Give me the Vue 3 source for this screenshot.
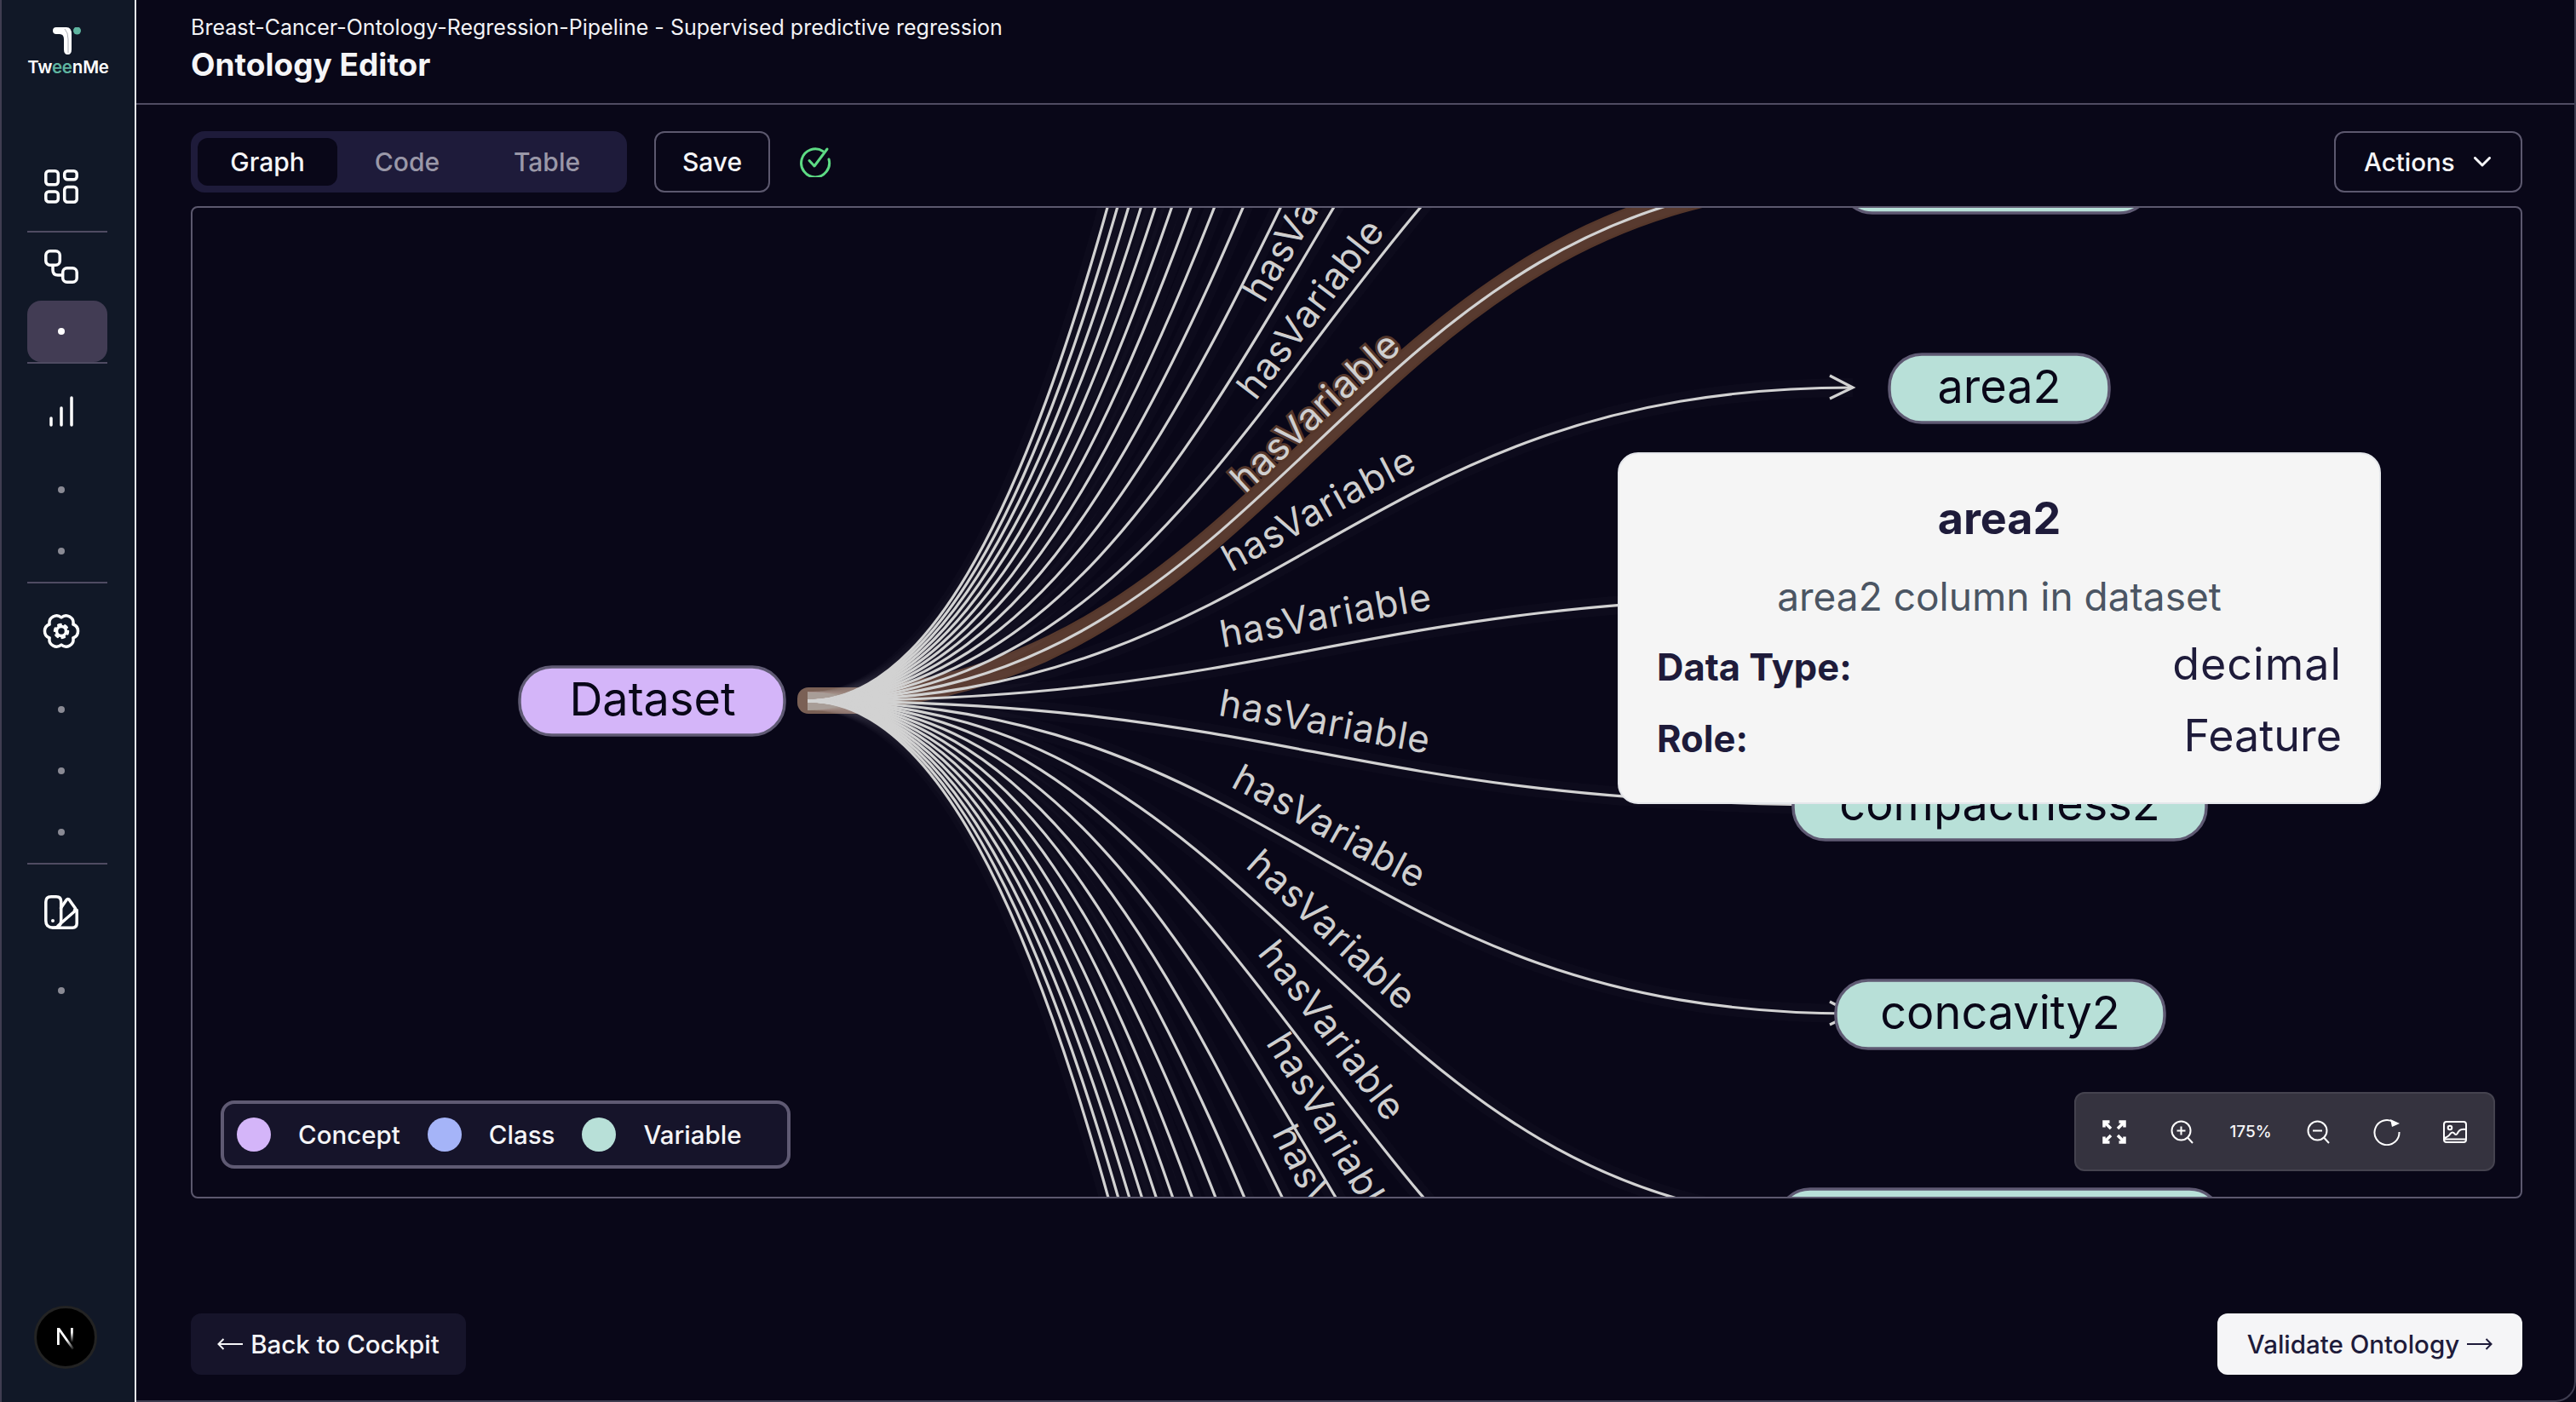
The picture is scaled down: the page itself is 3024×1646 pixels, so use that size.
<script setup>
// vertical spacing of the variable nodes in the graph
const STEP = 245
const START_X = 948
const START_Y = 823
const END_X = 2175

const ys = []
for (let k = -13; k <= 16; k++) ys.push(455 + k * STEP)

const edgePath = (y) =>
  `M${START_X} ${START_Y} C1510 ${START_Y} 1580 ${y} ${END_X} ${y}`

const edges = ys.map((y) => ({
  y,
  d: edgePath(y),
  arrow: `M${END_X - 27} ${y - 14} L${END_X} ${y} L${END_X - 27} ${y + 13}`,
  active: y === 210,
}))
const activeEdge = edgePath(210)

const labelOffset = (y) => {
  if (y === 700) return '50.1%'
  if (y < START_Y) return '50.5%'
  return `${49 - ((y - 945) / STEP) * 0.4}%`
}

// labels sit near the middle of an edge, the others fall outside the canvas
const labelled = edges
  .filter((edge) => edge.y > -300 && edge.y < 2200)
  .map((edge) => ({
    ...edge,
    offset: labelOffset(edge.y),
    dy: edge.y <= 210 ? -13 : -22,
  }))

const nodes = [
  { x: 2160, y: 170, w: 366, label: '' },
  { x: 2218, y: 416, w: 258, label: 'area2' },
  { x: 2105, y: 906, w: 485, label: 'compactness2' },
  { x: 2155, y: 1151, w: 386, label: 'concavity2' },
  { x: 2087, y: 1396, w: 521, label: '' },
]

const legend = [
  { name: 'Concept', cls: 'concept' },
  { name: 'Class', cls: 'class' },
  { name: 'Variable', cls: 'variable' },
]
</script>

<template>
  <div class="page">
    <aside class="sidebar">
      <div class="logo">
        <svg class="logo-mark" viewBox="0 0 36 34" width="36" height="34">
          <path d="M4 0H16Q22 0 22 8V26Q22 32 17.500 32Q13 32 13 26V14Q13 8 8 8H4Q0 8 0 4Q0 0 4 0Z" fill="#fff" />
          <path d="M14 2Q18 6 18 14V30" fill="none" stroke="#111827" stroke-width="1" opacity=".35" />
          <circle cx="28.500" cy="4" r="4.500" fill="#5fb5a0" />
        </svg>
        <div class="logo-text">Tw<span>ee</span>nMe</div>
      </div>

      <nav class="nav">
        <div class="nav-item gap-16">
          <svg viewBox="0 0 40 40" width="40" height="40" class="icon">
            <rect x="1.800" y="1.800" width="14.500" height="16" rx="3.500" />
            <rect x="23.700" y="1.800" width="14.500" height="10" rx="3.500" />
            <rect x="1.800" y="26" width="14.500" height="12" rx="3.500" />
            <rect x="23.700" y="20.500" width="14.500" height="17.700" rx="3.500" />
          </svg>
        </div>
        <div class="divider gap-4"></div>
        <div class="nav-item gap-4">
          <svg viewBox="0 0 40 40" width="40" height="40" class="icon">
            <rect x="1.800" y="1.800" width="16.500" height="16.500" rx="5" />
            <rect x="21.700" y="21.700" width="16.500" height="16.500" rx="5" />
            <path d="M10 18.500V24Q10 30 16 30H21" />
          </svg>
        </div>
        <div class="nav-item active"><span class="dot"></span></div>
        <div class="divider gap-20"></div>

        <div class="nav-item gap-20 bars">
          <svg viewBox="0 0 28 36" width="28" height="36" class="icon">
            <path d="M2 26V34M14 14V34M26 2V34" />
          </svg>
        </div>
        <div class="nav-item"><span class="dot"></span></div>
        <div class="nav-item"><span class="dot"></span></div>
        <div class="divider gap-20"></div>

        <div class="nav-item gap-20 gear">
          <svg viewBox="0 0 44 44" width="44" height="44" class="icon">
            <path d="M22 6A8.500 8.500 0 0 1 35.900 14L35.900 14A8.500 8.500 0 0 1 35.900 30A8.500 8.500 0 0 1 22 38A8.500 8.500 0 0 1 8.100 30A8.500 8.500 0 0 1 8.100 14A8.500 8.500 0 0 1 22 6Z" />
            <circle cx="22" cy="22" r="5.500" stroke-width="3.500" />
            <circle cx="22" cy="22" r="8" stroke-width="2.500" stroke-dasharray="3.500 4.880" />
          </svg>
        </div>
        <div class="nav-item"><span class="dot"></span></div>
        <div class="nav-item"><span class="dot"></span></div>
        <div class="nav-item"><span class="dot"></span></div>
        <div class="divider gap-20"></div>

        <div class="nav-item gap-20">
          <svg viewBox="0 0 40 40" width="40" height="40" class="icon">
            <path d="M8 1.800H14Q19.700 1.800 19.700 7.500V30Q19.700 38.200 10.700 38.200Q1.800 38.200 1.800 30V8Q1.800 1.800 8 1.800Z" />
            <path d="M19.500 15L26 5.500Q27.300 3.800 29 5L36.500 15.500Q37.500 17.500 35.500 19L16 36" />
            <path d="M35.500 17.500H38.200V33Q38.200 38.200 33 38.200H10" />
            <circle cx="10" cy="30" r="2" class="icon-fill" />
          </svg>
        </div>
        <div class="nav-item"><span class="dot"></span></div>
      </nav>

      <div class="avatar">
        <svg viewBox="0 0 30 30" width="30" height="30">
          <defs>
            <linearGradient id="n-fade" x1="0" y1="0" x2="1" y2="1">
              <stop offset="0.550" stop-color="#fff" />
              <stop offset="1" stop-color="#fff" stop-opacity="0" />
            </linearGradient>
            <linearGradient id="n-stem" x1="0" y1="0" x2="0" y2="1">
              <stop offset="0.300" stop-color="#fff" />
              <stop offset="1" stop-color="#fff" stop-opacity="0" />
            </linearGradient>
          </defs>
          <path d="M5 4H8L25 28L22.800 29.500L7.800 8.500V24H5Z" fill="url(#n-fade)" />
          <rect x="21" y="4" width="2.800" height="17" fill="url(#n-stem)" />
        </svg>
      </div>
    </aside>

    <main class="main">
      <header class="header">
        <div class="subtitle">Breast-Cancer-Ontology-Regression-Pipeline - Supervised predictive regression</div>
        <h1 class="title">Ontology Editor</h1>
      </header>

      <div class="toolbar">
        <div class="tabs">
          <button class="tab selected">Graph</button>
          <button class="tab">Code</button>
          <button class="tab">Table</button>
        </div>
        <button class="outline-btn save">Save</button>
        <svg class="saved" viewBox="0 0 38 36" width="38" height="36">
          <path d="M28 5.500A16.500 16.500 0 1 0 35 15" />
          <path d="M12 16.500L18 23L33 3" />
        </svg>
        <button class="outline-btn actions">
          Actions
          <svg viewBox="0 0 20 12" width="20" height="12">
            <path d="M1.500 1.500L10 10L18.500 1.500" />
          </svg>
        </button>
      </div>

      <section class="canvas">
        <svg class="graph" viewBox="226 244 2733 1161" width="2733" height="1161">
          <path :d="activeEdge" class="edge-active" />
          <rect x="936" y="807" width="84" height="31" rx="13" class="edge-stub" />
          <g v-for="edge in edges" :key="edge.y">
            <path :id="`edge-${edge.y}`" :d="edge.d" class="edge-glow" />
            <path :d="edge.d" class="edge" />
            <path :d="edge.arrow" class="edge" />
          </g>
          <text v-for="edge in labelled" :key="`label-${edge.y}`" class="edge-label" :class="{ on: edge.active }" :dy="edge.dy">
            <textPath :href="`#edge-${edge.y}`" :startOffset="edge.offset" text-anchor="middle">hasVariable</textPath>
          </text>

          <rect x="610" y="783" width="311" height="80" rx="38" class="node concept-node" />
          <text x="766" y="840" class="node-text" text-anchor="middle">Dataset</text>
          <g v-for="node in nodes" :key="node.x">
            <rect :x="node.x" :y="node.y" :width="node.w" height="80" rx="38" class="node variable-node" />
            <text :x="node.x + node.w / 2" :y="node.y + 57" class="node-text" text-anchor="middle">{{ node.label }}</text>
          </g>
        </svg>

        <div class="legend">
          <div v-for="item in legend" :key="item.name" class="legend-item">
            <span class="legend-dot" :class="item.cls"></span>
            <span>{{ item.name }}</span>
          </div>
        </div>

        <div class="zoom-bar">
          <svg viewBox="0 0 28 28" width="28" height="28" class="zoom-icon">
            <path d="M2 8.500V2H8.500M2.500 2.500L10 10M26 8.500V2H19.500M25.500 2.500L18 10M2 19.500V26H8.500M2.500 25.500L10 18M26 19.500V26H19.500M25.500 25.500L18 18" />
          </svg>
          <svg viewBox="0 0 28 28" width="28" height="28" class="zoom-icon thin">
            <circle cx="12.500" cy="12.500" r="11" />
            <path d="M12.500 7.500V17.500M7.500 12.500H17.500M20.500 21L26 27" />
          </svg>
          <span class="zoom-value">175%</span>
          <svg viewBox="0 0 28 28" width="28" height="28" class="zoom-icon thin">
            <circle cx="12.500" cy="12.500" r="11" />
            <path d="M7 12.500H18M20.500 21L26 27" />
          </svg>
          <svg viewBox="0 0 32 32" width="32" height="32" class="zoom-icon thin">
            <path d="M24 4.500A14.500 14.500 0 1 0 30.500 16" />
            <path d="M20 1L31 6L22 10Z" class="solid" />
          </svg>
          <svg viewBox="0 0 28 26" width="28" height="26" class="zoom-icon thin">
            <rect x="1" y="1" width="26" height="24" rx="3" />
            <circle cx="8" cy="8" r="2.300" />
            <path d="M1 20Q6 19 8.500 15Q11 12 13.500 15Q15.500 18 18 12.500Q20.500 9 27 10M1 21.500H27" />
          </svg>
        </div>

        <div class="tooltip">
          <div class="tooltip-title">area2</div>
          <div class="tooltip-desc">area2 column in dataset</div>
          <div class="tooltip-row">
            <span class="tooltip-key">Data Type:</span>
            <span class="tooltip-val wide">decimal</span>
          </div>
          <div class="tooltip-row">
            <span class="tooltip-key">Role:</span>
            <span class="tooltip-val">Feature</span>
          </div>
        </div>
      </section>

      <footer class="footer">
        <button class="back">
          <svg viewBox="0 0 30 14" width="30" height="14" class="arrow">
            <path d="M30 7H1.500M7.500 1L1.500 7L7.500 13" />
          </svg>
          Back to Cockpit
        </button>
        <button class="validate">
          Validate Ontology
          <svg viewBox="0 0 30 14" width="30" height="14" class="arrow">
            <path d="M0 7H28.500M22.500 1L28.500 7L22.500 13" />
          </svg>
        </button>
      </footer>
    </main>
  </div>
</template>

<style>
html,
body {
  margin: 0;
  background: #090718;
}
</style>

<style scoped>
.page {
  display: flex;
  width: 3024px;
  height: 1646px;
  font-family: Inter, "Noto Sans", sans-serif;
  color: #f5f5f7;
  background: #090718;
  overflow: hidden;
}

button {
  font-family: inherit;
  cursor: pointer;
}

/* sidebar */
.sidebar {
  display: flex;
  flex-direction: column;
  box-sizing: border-box;
  width: 160px;
  flex-shrink: 0;
  background: #111827;
  border-left: 2px solid #3f3d50;
  border-right: 2px solid #e8e8ee;
}

.logo {
  display: flex;
  flex-direction: column;
  align-items: center;
  margin-top: 32px;
  height: 58px;
}

.logo-mark {
  flex-shrink: 0;
  margin-left: 0;
}

.logo-text {
  font-size: 20.500px;
  font-weight: 600;
  line-height: 22px;
  margin-top: 2px;
  letter-spacing: -0.200px;
  color: #fff;
}

.logo-text span {
  color: #5fb5a0;
}

.nav {
  display: flex;
  flex-direction: column;
  width: 94px;
  margin: 93px 0 0 30px;
}

.nav-item {
  display: flex;
  align-items: center;
  height: 72px;
  padding-left: 20px;
  box-sizing: border-box;
  border-radius: 16px;
}

.nav-item.active {
  background: #423c54;
}

.nav-item.bars {
  padding-left: 26px;
}

.nav-item.gear {
  padding-left: 18px;
}

.gap-4 {
  margin-bottom: 4px;
}

.gap-16 {
  margin-bottom: 16px;
}

.gap-20 {
  margin-bottom: 20px;
}

.divider {
  height: 2px;
  background: #4f4b62;
}

.dot {
  width: 8px;
  height: 8px;
  margin-left: 16px;
  border-radius: 50%;
  background: #8a8a94;
}

.active .dot {
  background: #fff;
}

.icon {
  fill: none;
  stroke: #fff;
  stroke-width: 3.500;
  stroke-linecap: round;
  stroke-linejoin: round;
}

.icon-fill {
  fill: #fff;
  stroke: none;
}

.avatar {
  display: flex;
  align-items: center;
  justify-content: center;
  box-sizing: border-box;
  width: 74px;
  height: 74px;
  margin: auto 0 39px 38px;
  border-radius: 50%;
  background: #000;
  border: 3px solid #232323;
}

/* main column */
.main {
  display: flex;
  flex-direction: column;
  flex: 1;
  min-width: 0;
  box-sizing: border-box;
  border-right: 2px solid #3f3d50;
  border-bottom: 2px solid #3f3d50;
  border-bottom-right-radius: 24px;
}

.header {
  box-sizing: border-box;
  height: 123px;
  padding: 16px 0 0 64px;
  border-bottom: 2px solid #4f4b62;
}

.subtitle {
  font-size: 25px;
  font-weight: 400;
  line-height: 32px;
  letter-spacing: 0.020px;
  color: #f3f3f6;
}

.title {
  margin: 2px 0 0;
  font-size: 37px;
  font-weight: 700;
  line-height: 52px;
  color: #f5f5f7;
}

.toolbar {
  display: flex;
  align-items: center;
  height: 72px;
  margin-top: 31px;
  padding: 0 61px 0 64px;
}

.tabs {
  display: flex;
  align-items: center;
  box-sizing: border-box;
  width: 512px;
  height: 72px;
  padding: 0 12px 0 8px;
  border-radius: 16px;
  background: #1e1b3a;
}

.tab {
  width: 164px;
  height: 56px;
  padding: 0;
  border: none;
  border-radius: 12px;
  background: transparent;
  color: #9a98a8;
  font-size: 30px;
  font-weight: 500;
}

.tab.selected {
  background: #090718;
  color: #f5f5f7;
}

.outline-btn {
  height: 72px;
  box-sizing: border-box;
  border: 2px solid #5c586e;
  border-radius: 12px;
  background: transparent;
  color: #f5f5f7;
  font-size: 30px;
  font-weight: 500;
}

.save {
  width: 136px;
  margin-left: 32px;
}

.saved {
  margin-left: 34px;
  fill: none;
  stroke: #5ddb84;
  stroke-width: 3;
  stroke-linecap: round;
  stroke-linejoin: round;
}

.actions {
  display: flex;
  align-items: center;
  gap: 22px;
  width: 221px;
  margin-left: auto;
  padding: 0 0 0 33px;
  font-size: 29.500px;
}

.actions svg {
  fill: none;
  stroke: #f5f5f7;
  stroke-width: 3;
  stroke-linecap: round;
  stroke-linejoin: round;
}

/* graph */
.canvas {
  position: relative;
  box-sizing: border-box;
  width: 2737px;
  height: 1165px;
  margin: 16px 0 0 64px;
  border: 2px solid #5c586e;
  border-radius: 8px;
  overflow: hidden;
}

.graph {
  position: absolute;
  inset: 0;
  display: block;
}

.edge,
.edge-glow,
.edge-active {
  fill: none;
}

.edge {
  stroke: #d2d2d2;
  stroke-width: 3.200;
}

.edge-glow {
  stroke: #fff;
  stroke-opacity: 0.018;
  stroke-width: 22;
}

.edge-active {
  stroke: #55372b;
  stroke-width: 27;
}

.edge-stub {
  fill: #7a6055;
}

.edge-label {
  fill: #cfcfcf;
  font-size: 44px;
  letter-spacing: 1px;
  font-weight: 400;
}

.edge-label.on {
  stroke: #55372b;
  stroke-width: 6px;
  paint-order: stroke;
}

.node {
  stroke: #5f5a73;
  stroke-width: 3.500;
}

.concept-node {
  fill: #d4b5f9;
}

.variable-node {
  fill: #b8e0d8;
}

.node-text {
  fill: #090718;
  font-size: 54px;
}

.legend {
  position: absolute;
  left: 33px;
  top: 1048px;
  display: flex;
  align-items: center;
  gap: 32px;
  box-sizing: border-box;
  width: 669px;
  height: 80px;
  padding-left: 15px;
  border: 4px solid #5f5a73;
  border-radius: 16px;
  background: #16142a;
  font-size: 29.500px;
  font-weight: 500;
}

.legend-item {
  display: flex;
  align-items: center;
  gap: 32px;
}

.legend-dot {
  width: 40px;
  height: 40px;
  border-radius: 50%;
}

.legend-dot.concept {
  background: #d4b5f9;
}

.legend-dot.class {
  background: #a5b4f8;
}

.legend-dot.variable {
  background: #b8e0d8;
}

.zoom-bar {
  position: absolute;
  right: 30px;
  top: 1038px;
  display: grid;
  grid-template-columns: repeat(6, 80px);
  align-items: center;
  justify-items: center;
  box-sizing: border-box;
  width: 494px;
  height: 93px;
  padding: 0 5px;
  border: 2px solid #45434f;
  border-radius: 12px;
  background: #35333f;
}

.zoom-icon {
  fill: none;
  stroke: #fff;
  stroke-width: 3.500;
}

.zoom-icon.thin {
  stroke-width: 2;
}

.zoom-icon .solid {
  fill: #fff;
  stroke: none;
}

.zoom-value {
  font-size: 19px;
  font-weight: 500;
  color: #f5f5f7;
}

.tooltip {
  position: absolute;
  left: 1673px;
  top: 287px;
  box-sizing: border-box;
  width: 896px;
  height: 413px;
  padding: 47px 44px 0 44px;
  border: 2px solid #e5e7eb;
  border-radius: 24px;
  background: #f5f5f5;
  color: #1e1b3a;
}

.tooltip-title {
  font-size: 52px;
  font-weight: 700;
  line-height: 58px;
  text-align: center;
}

.tooltip-desc {
  margin-top: 33px;
  font-size: 46px;
  line-height: 58px;
  text-align: center;
  color: #4b5563;
}

.tooltip-row {
  display: flex;
  justify-content: space-between;
  align-items: center;
  height: 84px;
}

.tooltip-desc + .tooltip-row {
  margin-top: 12px;
}

.tooltip-key {
  font-size: 43.500px;
  font-weight: 700;
}

.tooltip-val {
  font-size: 52px;
  margin-top: -8px;
}

.tooltip-val.wide {
  letter-spacing: 1px;
}

/* footer */
.footer {
  display: flex;
  justify-content: space-between;
  margin: auto 61px 30px 64px;
}

.back,
.validate {
  display: flex;
  align-items: center;
  justify-content: center;
  gap: 9px;
  height: 72px;
  padding: 0;
  border: none;
  border-radius: 12px;
  font-size: 29.500px;
  font-weight: 500;
}

.arrow {
  fill: none;
  stroke: currentColor;
  stroke-width: 2;
}

.back {
  width: 323px;
  background: #16142a;
  color: #f5f5f7;
}

.validate {
  width: 358px;
  background: #f5f5f7;
  color: #1e1b3a;
}
</style>
